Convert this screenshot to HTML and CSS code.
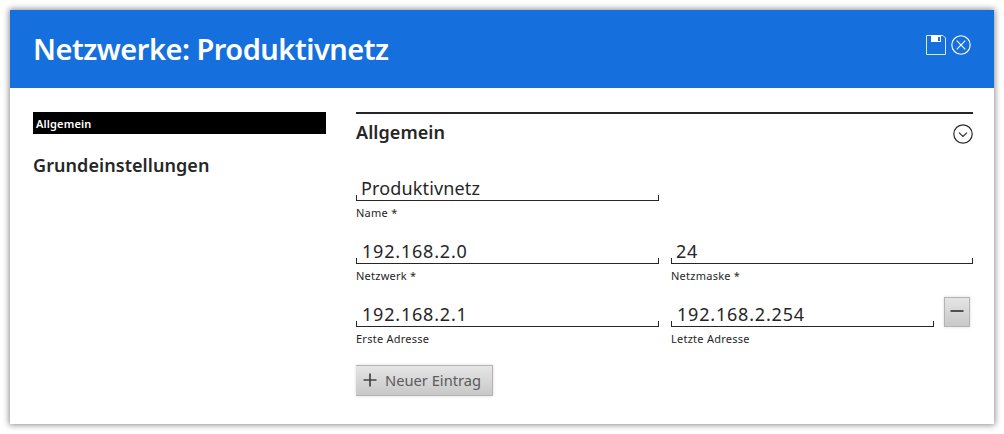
FILE: index.html
```html
<!DOCTYPE html>
<html lang="de">
<head>
<meta charset="utf-8">
<title>Netzwerke: Produktivnetz</title>
<link rel="stylesheet" href="styles.css">
</head>
<body>
<main class="dialog">
  <header class="header">
    <h1 class="title">Netzwerke: Produktivnetz</h1>
    <div class="actions">
      <svg class="save" width="20" height="20" viewBox="0 0 20 20"><path d="M.5.5H17L19.5 3v16.5H.5z" fill="none" stroke="#d6e6fb"/><path d="M5 0h10v7H5z" fill="#fff"/><path d="M12 2h2v4h-2z" fill="#156fdd"/></svg>
      <svg width="20" height="20" viewBox="0 0 20 20" fill="none" stroke="#fff" stroke-width="1.1"><circle cx="10" cy="10" r="9.2"/><path d="m5.7 5.7 8.6 8.6m0-8.6-8.6 8.6"/></svg>
    </div>
  </header>
  <div class="body">
    <nav class="nav">
      <div class="tab"><span class="tab-text">Allgemein</span></div>
      <h2 class="heading nav-heading"><span>Grundeinstellungen</span></h2>
    </nav>
    <section class="section">
      <div class="section-head">
        <h2 class="heading sub"><span>Allgemein</span></h2>
        <svg class="toggle" width="20" height="20" viewBox="0 0 20 20" fill="none" stroke="#2a2a2a" stroke-width="1.2"><circle cx="10" cy="10" r="9.2"/><path d="m6 8.6 4 3.8 4-3.8"/></svg>
      </div>
      <div class="row">
        <div class="field"><div class="input name">Produktivnetz</div><div class="label l-name">Name *</div></div>
      </div>
      <div class="row">
        <div class="field"><div class="input ip">192.168.2.0</div><div class="label">Netzwerk *</div></div>
        <div class="field"><div class="input mask">24</div><div class="label">Netzmaske *</div></div>
      </div>
      <div class="row">
        <div class="field"><div class="input ip">192.168.2.1</div><div class="label">Erste Adresse</div></div>
        <div class="field short"><div class="input ip">192.168.2.254</div><div class="label">Letzte Adresse</div></div>
        <div class="button remove"><svg width="14" height="14" viewBox="0 0 14 14"><path d="M.5 5h13v2H.5z" fill="#505050"/></svg></div>
      </div>
      <div class="button add"><svg class="plus" width="14" height="14" viewBox="0 0 14 14"><path d="M.5 7h13M7 .5v13" stroke="#444" stroke-width="1.7"/></svg><span class="add-text">Neuer Eintrag</span></div>
    </section>
  </div>
</main>
</body>
</html>
```
FILE: styles.css
```css
* { box-sizing: border-box; }
body { margin: 0; padding: 10px; background: #fff; color: #262626; font-family: "Noto Sans", sans-serif; }
.dialog { width: 984px; height: 414px; background: #fff; box-shadow: 0 0 6px 1px rgba(0, 0, 0, .45); }
.header { display: flex; justify-content: space-between; height: 78px; padding: 0 23px; background: #156fdd; }
.title { margin: 0; font-size: 29px; line-height: 77px; font-weight: 600; letter-spacing: -.5px; color: #fff; white-space: nowrap; }
.actions { display: flex; gap: 5px; padding-top: 25px; }
.body { display: flex; gap: 30px; padding: 24px 21px 0 23px; }
.nav { width: 293px; }
.tab { height: 22px; padding-left: 3px; background: #000; color: #fff; font-size: 11px; line-height: 24px; font-weight: 600; letter-spacing: .15px; }
.heading { margin: 0; font-size: 18px; line-height: 26px; font-weight: 600; letter-spacing: .06px; white-space: nowrap; }
.nav-heading { margin-top: 18px; }
.section { width: 617px; }
.section-head { display: flex; justify-content: space-between; height: 64px; border-top: 2px solid #262626; }
.sub { padding-top: 5px; }
.toggle { margin-top: 10px; }
.row { display: flex; gap: 12px; height: 63px; }
.field { width: 303px; }
.field + .field { width: 302px; }
.field + .short { width: 263px; }
.input { height: 25px; padding-left: 6px; font-size: 18px; line-height: 24px; letter-spacing: .8px; white-space: nowrap; background: linear-gradient(#262626, #262626) left bottom / 1px 6px no-repeat, linear-gradient(#262626, #262626) right bottom / 1px 6px no-repeat, linear-gradient(#262626, #262626) left bottom / 100% 1px no-repeat; }
.name, .mask { padding-left: 5px; }
.name { letter-spacing: .15px; }
.label { padding-top: 3px; font-size: 11px; line-height: 17px; letter-spacing: .25px; white-space: nowrap; }
.button { display: flex; align-items: center; border: 1px solid #b3b3b3; background: linear-gradient(#e5e5e5, #c8c8c8); box-shadow: 0 0 3px rgba(0, 0, 0, .15); }
.remove { width: 26px; height: 30px; margin: -5px 0 0 -2px; justify-content: center; }
.add { width: 137px; height: 31px; border-left: 0; padding-left: 7px; gap: 8px; font-size: 14.7px; color: #5b5b5b; white-space: nowrap; }
.plus { margin-bottom: 2px; }
.add-text { padding-bottom: 1px; }
```
